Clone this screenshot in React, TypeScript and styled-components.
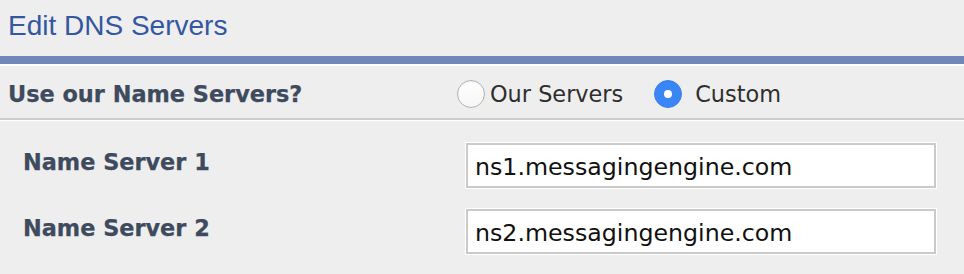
import React, { useState } from "react";
import styled, { createGlobalStyle } from "styled-components";

const GlobalStyle = createGlobalStyle`
  html, body {
    margin: 0;
    padding: 0;
    background: #eeeeee;
  }
`;

const Page = styled.div`
  width: 964px;
  height: 274px;
  overflow: hidden;
  background: #eeeeee;
  display: flex;
  flex-direction: column;
`;

const Header = styled.div`
  height: 46px;
  padding: 10px 0 0 8px;
  border-bottom: 8px solid #6f88b7;
`;

const Title = styled.h1`
  margin: 0;
  font-family: "Liberation Sans", Arial, sans-serif;
  font-weight: normal;
  font-size: 28px;
  color: #3457a1;
`;

const ChoiceRow = styled.div`
  display: flex;
  align-items: center;
  box-sizing: border-box;
  height: 56px;
  padding: 3px 0 0 8px;
  border-top: 2px solid #ffffff;
  border-bottom: 2px solid #cccccc;
  box-shadow: 0 1px 0 #ffffff;
`;

const Label = styled.div<{ $width: number }>`
  width: ${(p) => p.$width}px;
  flex-shrink: 0;
  font-family: "DejaVu Sans", Verdana, sans-serif;
  font-weight: bold;
  font-size: 22.4px;
  color: #3e4a5d;
  -webkit-text-stroke: 0.25px #3e4a5d;
`;

const Radio = styled.input.attrs({ type: "radio" })`
  appearance: none;
  -webkit-appearance: none;
  margin: 0;
  width: 28px;
  height: 28px;
  border-radius: 50%;
  box-sizing: border-box;
  background: linear-gradient(#ffffff, #f6f6f6);
  border: 1px solid #b3b3b3;
  box-shadow: inset 0 1px 1px rgba(0, 0, 0, 0.06);
  display: grid;
  place-items: center;

  &:checked {
    background: #3b86f7;
    border-color: #3a84f3;
  }
  &:checked::after {
    content: "";
    width: 8px;
    height: 8px;
    border-radius: 50%;
    background: #ffffff;
  }
`;

const Option = styled.label<{ $gap: number; $after: number }>`
  display: flex;
  align-items: center;
  gap: ${(p) => p.$gap}px;
  margin-right: ${(p) => p.$after}px;
  font-family: "DejaVu Sans", Verdana, sans-serif;
  font-size: 22.4px;
  color: #2e2e2e;
  cursor: pointer;
`;

const Servers = styled.div`
  display: flex;
  flex-direction: column;
  gap: 21px;
  padding: 23px 0 0 23px;
`;

const ServerRow = styled.div`
  display: flex;
  align-items: flex-start;
`;

const ServerLabel = styled(Label)`
  padding-top: 6px;
`;

const TextInput = styled.input`
  width: 470px;
  height: 45px;
  box-sizing: border-box;
  border: 2px solid #cacaca;
  box-shadow: 0 0 0 1px #ffffff;
  background: #ffffff;
  padding: 2px 7px 0;
  font-family: "DejaVu Sans", Verdana, sans-serif;
  font-size: 23.7px;
  color: #111111;
  outline: none;
`;

export default function App() {
  const [mode, setMode] = useState("custom");
  const [servers, setServers] = useState([
    "ns1.messagingengine.com",
    "ns2.messagingengine.com",
  ]);

  return (
    <Page>
      <GlobalStyle />
      <Header>
        <Title>Edit DNS Servers</Title>
      </Header>
      <ChoiceRow>
        <Label $width={449}>Use our Name Servers?</Label>
        <Option $gap={5} $after={31}>
          <Radio
            name="ns"
            checked={mode === "ours"}
            onChange={() => setMode("ours")}
          />
          Our Servers
        </Option>
        <Option $gap={13} $after={0}>
          <Radio
            name="ns"
            checked={mode === "custom"}
            onChange={() => setMode("custom")}
          />
          Custom
        </Option>
      </ChoiceRow>
      <Servers>
        {servers.map((value, i) => (
          <ServerRow key={i}>
            <ServerLabel $width={443}>Name Server {i + 1}</ServerLabel>
            <TextInput
              value={value}
              onChange={(e) =>
                setServers(servers.map((s, j) => (j === i ? e.target.value : s)))
              }
            />
          </ServerRow>
        ))}
      </Servers>
    </Page>
  );
}
